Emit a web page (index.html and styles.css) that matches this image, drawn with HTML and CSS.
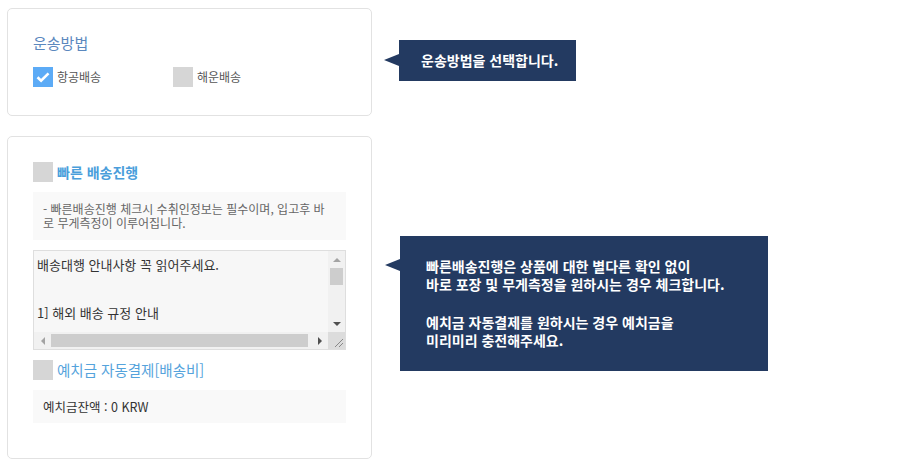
FILE: index.html
```html
<!DOCTYPE html>
<html lang="ko">
<head>
  <meta charset="UTF-8">
  <meta name="viewport" content="width=device-width, initial-scale=1.0">
  <title>배송 신청</title>
  <link rel="stylesheet" href="styles.css">
</head>
<body>
  <div class="page">
    <div class="row">
      <section class="card card-method">
        <h3 class="card-title">운송방법</h3>
        <div class="options">
          <label class="check-label">
            <span class="check is-checked">
              <svg width="20" height="20" viewBox="0 0 20 20"><path d="M4.5 10.2l3.6 3.5 7.4-7.4" fill="none" stroke="#fff" stroke-width="2.6"/></svg>
            </span>
            항공배송
          </label>
          <label class="check-label">
            <span class="check"></span>
            해운배송
          </label>
        </div>
      </section>
      <div class="tip tip-method">운송방법을 선택합니다.</div>
    </div>

    <div class="row row-fast">
      <section class="card card-fast">
        <label class="check-label check-head">
          <span class="check"></span>
          빠른 배송진행
        </label>
        <div class="note">- 빠른배송진행 체크시 수취인정보는 필수이며, 입고후 바<br>로 무게측정이 이루어집니다.</div>

        <div class="guide">
          <div class="guide-text">배송대행 안내사항 꼭 읽어주세요.


1] 해외 배송 규정 안내</div>
          <div class="vbar">
            <span class="sb-btn"><i class="arrow arrow-up"></i></span>
            <span class="sb-track"><span class="sb-thumb"></span></span>
            <span class="sb-btn"><i class="arrow arrow-down"></i></span>
          </div>
          <div class="hbar">
            <span class="sb-btn"><i class="arrow arrow-left"></i></span>
            <span class="sb-track"><span class="sb-thumb"></span></span>
            <span class="sb-btn"><i class="arrow arrow-right"></i></span>
          </div>
          <div class="sb-corner">
            <svg width="17" height="17" viewBox="0 0 17 17"><path d="M7 15L15 7M11 15L15 11" stroke="#888" stroke-width="1"/></svg>
          </div>
        </div>

        <label class="check-label check-head check-deposit">
          <span class="check"></span>
          예치금 자동결제[배송비]
        </label>
        <div class="balance">예치금잔액 : 0 KRW</div>
      </section>
      <div class="tip tip-fast">
        <p>빠른배송진행은 상품에 대한 별다른 확인 없이<br>바로 포장 및 무게측정을 원하시는 경우 체크합니다.</p>
        <p>예치금 자동결제를 원하시는 경우 예치금을<br>미리미리 충전해주세요.</p>
      </div>
    </div>
  </div>
</body>
</html>
```

FILE: styles.css
```css
body {
  margin: 0;
  background: #fff;
  font-family: "Noto Sans CJK KR", "Noto Sans", sans-serif;
  color: #555;
}
.page {
  padding: 8px 0 0 7px;
}
.row {
  display: flex;
  align-items: flex-start;
}
.row-fast {
  margin-top: 20px;
}
.card {
  box-sizing: border-box;
  width: 365px;
  border: 1px solid #e2e2e2;
  border-radius: 5px;
  background: #fff;
  padding: 24px 25px 28px;
}
.card-title {
  margin: 0 0 14px;
  font-size: 15px;
  line-height: 20px;
  font-weight: normal;
  color: #5b88be;
}
.options {
  display: flex;
}
.check-label {
  display: flex;
  align-items: center;
  width: 140px;
  font-size: 12px;
  line-height: 20px;
  color: #555;
}
.check {
  width: 20px;
  height: 20px;
  margin-right: 4px;
  background: #d6d6d6;
  flex-shrink: 0;
}
.check.is-checked {
  background: #5cabf6;
}
.check svg {
  display: block;
}

.card-fast {
  padding: 25px 25px 35px;
}
.check-head {
  width: auto;
  font-size: 14px;
  font-weight: bold;
  color: #4a9edb;
}
.check-deposit {
  font-weight: normal;
  font-size: 14.5px;
  color: #55a3dc;
  margin-top: 10px;
}
.note {
  margin-top: 10px;
  background: #f9f9f9;
  padding: 10px 10px;
  font-size: 12px;
  line-height: 14px;
  color: #666;
}

/* notice box with classic scrollbars */
.guide {
  display: grid;
  grid-template-columns: 1fr 17px;
  grid-template-rows: 1fr 17px;
  box-sizing: border-box;
  height: 100px;
  margin-top: 10px;
  border: 1px solid #dedede;
  background: #f7f7f7;
}
.guide-text {
  overflow: hidden;
  white-space: pre;
  padding: 6px 3px;
  font-size: 13px;
  line-height: 16px;
  color: #333;
}
.vbar, .hbar {
  display: flex;
  background: #f1f1f1;
}
.vbar {
  flex-direction: column;
}
.sb-btn {
  flex: 0 0 17px;
  display: flex;
  align-items: center;
  justify-content: center;
}
.sb-track {
  flex: 1;
  display: flex;
}
.vbar .sb-track {
  flex-direction: column;
  padding: 0 2px;
}
.hbar .sb-track {
  padding: 2px 0;
}
.sb-thumb {
  background: #cdcdcd;
}
.vbar .sb-thumb {
  height: 17px;
  width: 100%;
}
.hbar .sb-thumb {
  width: 257px;
  height: 100%;
}
.sb-corner {
  background: #dcdcdc;
}
.sb-corner svg {
  display: block;
}
.arrow {
  width: 0;
  height: 0;
  border: 4px solid transparent;
}
.arrow-up {
  border-top: 0;
  border-bottom-color: #a3a3a3;
}
.arrow-down {
  border-bottom: 0;
  border-top-color: #505050;
}
.arrow-left {
  border-left: 0;
  border-right-color: #a3a3a3;
}
.arrow-right {
  border-right: 0;
  border-left-color: #505050;
}

.balance {
  margin-top: 10px;
  background: #f9f9f9;
  padding: 0 10px;
  font-size: 12.5px;
  line-height: 33px;
  color: #333;
}

.tip {
  position: relative;
  background: #233a61;
  color: #fff;
  font-weight: bold;
  font-size: 14px;
}
.tip::before {
  content: "";
  position: absolute;
  left: -15px;
  border-style: solid;
  border-width: 6px 15px 6px 0;
  border-color: transparent #233a61 transparent transparent;
}
.tip-method {
  margin: 32px 0 0 27px;
  padding: 10px 18px 11px 22px;
  line-height: 20px;
}
.tip-method::before {
  top: 14px;
}
.tip-fast {
  box-sizing: border-box;
  width: 368px;
  margin: 100px 0 0 28px;
  padding: 21px 20px 22px 26px;
  line-height: 18px;
}
.tip-fast::before {
  top: 23px;
}
.tip-fast p {
  margin: 0;
}
.tip-fast p + p {
  margin-top: 20px;
}
```
